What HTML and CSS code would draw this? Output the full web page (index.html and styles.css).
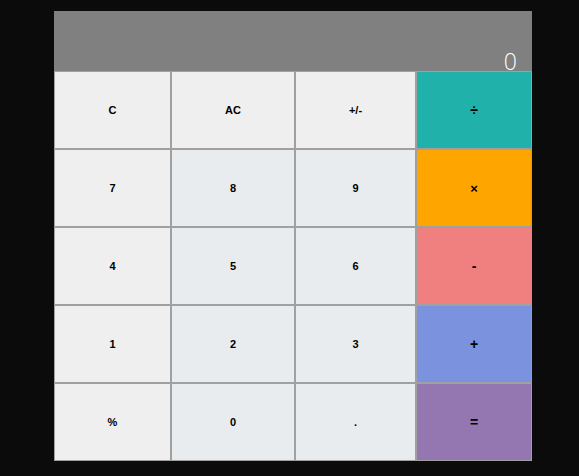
FILE: index.html
```html
<!DOCTYPE html>
<html>
<head>
<meta charset="utf-8">
<link rel="stylesheet" href="styles.css">
</head>
<body>
<div class="calc">
  <div class="display">0</div>
  <div class="keys">
    <button class="key fn">C</button>
    <button class="key fn">AC</button>
    <button class="key fn">+/-</button>
    <button class="key op div">÷</button>
    <button class="key fn">7</button>
    <button class="key num">8</button>
    <button class="key num">9</button>
    <button class="key op mul">×</button>
    <button class="key fn">4</button>
    <button class="key num">5</button>
    <button class="key num">6</button>
    <button class="key op sub">-</button>
    <button class="key fn">1</button>
    <button class="key num">2</button>
    <button class="key num">3</button>
    <button class="key op add">+</button>
    <button class="key fn">%</button>
    <button class="key num">0</button>
    <button class="key num">.</button>
    <button class="key op eq">=</button>
  </div>
</div>
</body>
</html>
```
FILE: styles.css
```css
html, body {
  margin: 0;
  padding: 0;
  background: #0b0b0b;
  font-family: "Liberation Sans", Arial, sans-serif;
}
body {
  padding: 11px 0 0 54px;
}
.calc {
  width: 478px;
}
.display {
  height: 60px;
  background: #808080;
  color: #ffffff;
  font-family: "Open Sans", "Liberation Sans", sans-serif;
  font-weight: 300;
  font-size: 23px;
  line-height: 23px;
  text-align: right;
  box-sizing: border-box;
  padding: 39px 15px 0 0;
}
.keys {
  display: grid;
  grid-template-columns: 117px 124px 121px 116px;
  grid-auto-rows: 78px;
}
.key {
  margin: 0;
  border: 1px solid #a0a0a0;
  font-family: "Liberation Sans", Arial, sans-serif;
  font-size: 11px;
  font-weight: bold;
  color: #000;
  padding: 0;
}
.fn { background: #efefef; }
.num { background: #e9ecef; }
.op { font-size: 14px; }
.div { background: #20b2aa; }
.mul { background: #ffa500; font-size: 13px; }
.sub { background: #f08080; }
.add { background: #7b92de; }
.eq { background: #9477b0; }
```
